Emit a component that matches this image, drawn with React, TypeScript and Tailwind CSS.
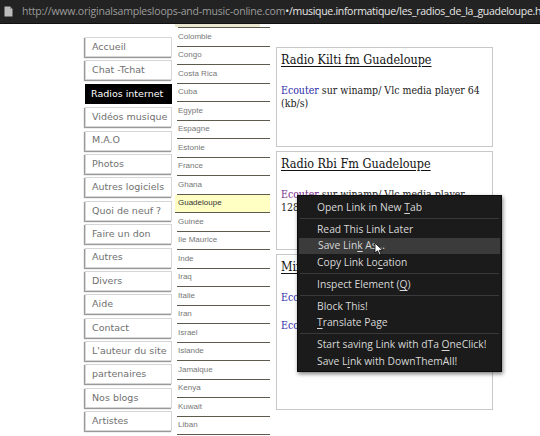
const navItems = [
  'Accueil',
  'Chat -Tchat',
  'Radios internet',
  'Vidéos musique',
  'M.A.O',
  'Photos',
  'Autres logiciels',
  'Quoi de neuf ?',
  'Faire un don',
  'Autres',
  'Divers',
  'Aide',
  'Contact',
  "L'auteur du site",
  'partenaires',
  'Nos blogs',
  'Artistes',
];

const countries = [
  'Colombie', 'Congo', 'Costa Rica', 'Cuba', 'Egypte', 'Espagne', 'Estonie', 'France', 'Ghana',
  'Guadeloupe', 'Guinée', 'Ile Maurice', 'Inde', 'Iraq', 'Italie', 'Iran', 'Israel', 'Islande',
  'Jamaique', 'Kenya', 'Kuwait', 'Liban',
];

function U({ children }: { children: string }) {
  return <span className="underline underline-offset-2">{children}</span>;
}

function ContextMenu() {
  const item = 'h-[16.5px] flex items-center pl-[19px] whitespace-pre';
  const sep = 'h-px bg-[#3a3a3a] my-[2.25px] mx-[2px]';
  return (
    <div
      className="absolute left-[297px] top-[195px] w-[205px] bg-[#1b1b1b] border border-[#0c0c0c] text-[#d8d8d8] text-[10.3px] pt-[3px] pb-[1px] shadow-[1px_2px_4px_rgba(0,0,0,0.5)]"
      style={{ fontFamily: '"Open Sans", "DejaVu Sans", sans-serif' }}
    >
      <div className={item}><span>Open Link in New <U>T</U>ab</span></div>
      <div className={sep} />
      <div className={item}><span>Read This Link Later</span></div>
      <div className={item + ' bg-[#3b3b3b] mx-[1px] pl-[18px]'}><span>Save Lin<U>k</U> As...</span></div>
      <div className={item}><span>Copy Link Lo<U>c</U>ation</span></div>
      <div className={sep} />
      <div className={item}><span>Inspect Element (<U>Q</U>)</span></div>
      <div className={sep} />
      <div className={item}><span>Block This!</span></div>
      <div className={item}><span><U>T</U>ranslate Page</span></div>
      <div className={sep} />
      <div className={item}><span>Start saving Link with dTa <U>O</U>neClick!</span></div>
      <div className={item}><span>Save L<U>i</U>nk with DownThemAll!</span></div>
    </div>
  );
}

function Cursor() {
  return (
    <svg className="absolute left-[374px] top-[242px]" width="10" height="14" viewBox="0 0 10 14">
      <path d="M1 1 L1 11 L3.5 8.8 L5.5 13 L7 12.3 L5.2 8.3 L8.6 8.3 Z" fill="#fff" stroke="#000" strokeWidth="0.8" />
    </svg>
  );
}

const serif = { fontFamily: '"DejaVu Serif", "Liberation Serif", serif', fontStretch: 'condensed' as const };

export default function App() {
  return (
    <div className="relative w-[540px] h-[436px] overflow-hidden bg-white">
      {/* browser location bar */}
      <div
        className="h-[24px] bg-[#232323] border-b border-[#111] flex items-center text-[10.5px] whitespace-nowrap overflow-hidden"
        style={{ fontFamily: '"Open Sans", "DejaVu Sans", sans-serif' }}
      >
        <svg className="ml-[4px] mr-[9px] shrink-0" width="9" height="11" viewBox="0 0 9 11">
          <path d="M0.5 0.5 H6 L8.5 3 V10.5 H0.5 Z" fill="#bdbdbd" />
          <path d="M6 0.5 V3 H8.5" fill="#8a8a8a" />
        </svg>
        <span className="text-[#9c9c9c] tracking-[-0.2px]">http://www.originalsamplesloops-and-music-online.com</span>
        <span className="text-[#e6e6e6] tracking-[-0.3px]">•/musique.informatique/les_radios_de_la_guadeloupe.ht</span>
      </div>

      <div className="flex">
        {/* left nav */}
        <div
          className="ml-[85px] w-[87px] pt-[13px] flex flex-col gap-[3.4px]"
          style={{ fontFamily: '"DejaVu Sans", Verdana, sans-serif' }}
        >
          {navItems.map((n) => (
            <div
              key={n}
              className={
                'h-[20px] flex items-center pl-[6px] text-[9.5px] whitespace-nowrap overflow-hidden ' +
                (n === 'Radios internet'
                  ? 'bg-black text-white'
                  : 'bg-white text-[#707070] border border-[#d6d6d6] shadow-[-1px_1px_1px_#9a9a9a]')
              }
            >
              {n}
            </div>
          ))}
        </div>

        {/* country list */}
        <div className="ml-[3px] w-[95px]" style={{ fontFamily: '"Liberation Sans", Arial, sans-serif' }}>
          <div className="h-[3px] mr-[10px] bg-[#ebe8d2]" />
          <div className="h-[1px] ml-[3px] bg-[#5e5b4c]" />
          {countries.map((c) => (
            <div
              key={c}
              className={
                'h-[18.5px] flex items-center pl-[3px] text-[8px] ' +
                (c === 'Guadeloupe'
                  ? 'bg-[#ffffc4] text-[#333] border-b border-[#5e5b4c]'
                  : 'text-[#777] border-b border-[#5e5b4c] [border-image:linear-gradient(to_right,transparent_3px,#5e5b4c_3px)_1]')
              }
            >
              {c}
            </div>
          ))}
        </div>

        {/* content */}
        <div className="ml-[6px] w-[217px] pt-[23px] flex flex-col gap-[4px]" style={serif}>
          <div className="h-[100px] border border-[#c8c8c8] pl-[4px] pr-[10px] pt-[3px]">
            <div className="text-[12.5px] underline underline-offset-2 text-[#111]">Radio Kilti fm Guadeloupe</div>
            <div className="mt-[14px] text-[10.5px] leading-[13px] text-[#222]">
              <span className="text-[#2a2aa8]">Ecouter</span> sur winamp/ Vlc media player 64 (kb/s)
            </div>
          </div>
          <div className="h-[99px] border border-[#c8c8c8] pl-[4px] pr-[10px] pt-[3px]">
            <div className="text-[12.5px] underline underline-offset-2 text-[#111]">Radio Rbi Fm Guadeloupe</div>
            <div className="mt-[14px] text-[10.5px] leading-[13px] text-[#222]">
              <span className="text-[#7a2a8a]">Ecouter</span> sur winamp/ Vlc media player 128 (kb/s)
            </div>
          </div>
          <div className="h-[156px] border border-[#c8c8c8] pl-[4px] pr-[10px] pt-[3px]">
            <div className="text-[12.5px] underline underline-offset-2 text-[#111]">Mix Radio Guadeloupe</div>
            <div className="mt-[14px] text-[10.5px] leading-[13px] text-[#222]">
              <span className="text-[#2a2aa8]">Ecouter</span> sur winamp/ Vlc media player
            </div>
            <div className="mt-[15px] text-[10.5px] leading-[13px] text-[#222]">
              <span className="text-[#2a2aa8]">Ecouter</span> sur winamp/ Vlc media player
            </div>
          </div>
        </div>
      </div>

      <ContextMenu />
      <Cursor />
    </div>
  );
}
